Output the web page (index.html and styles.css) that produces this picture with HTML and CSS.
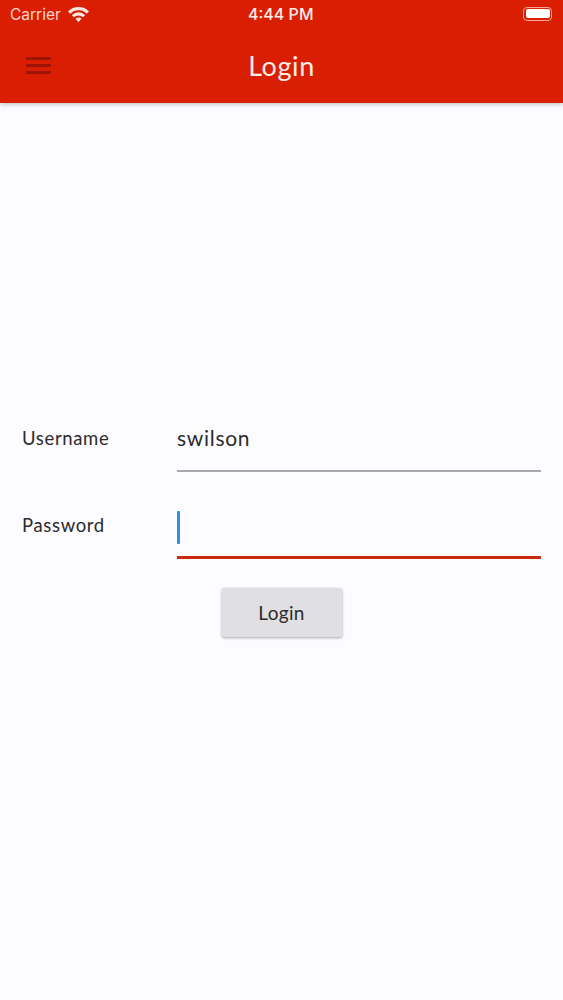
FILE: index.html
```html
<!DOCTYPE html>
<html lang="en">
<head>
    <meta charset="UTF-8">
    <title>Login</title>
    <link rel="stylesheet" href="styles.css">
</head>
<body>
    <header class="app-header">
        <div class="status-bar">
            <div class="status-left">
                <span class="carrier">Carrier</span>
                <svg class="wifi" viewBox="0 0 20 15" width="21" height="16">
                    <path d="M0 5 A14 14 0 0 1 20 5 L17.8 7.2 A11 11 0 0 0 2.2 7.2 Z" fill="#fde6e0"/>
                    <path d="M3.6 8.6 A9 9 0 0 1 16.4 8.6 L14.3 10.7 A6 6 0 0 0 5.7 10.7 Z" fill="#fde6e0"/>
                    <path d="M7.1 12.1 A4 4 0 0 1 12.9 12.1 L10 15 Z" fill="#fde6e0"/>
                </svg>
            </div>
            <span class="clock">4:44 PM</span>
            <div class="battery"><div class="battery-fill"></div></div>
        </div>
        <div class="toolbar">
            <div class="menu-icon"><span></span><span></span><span></span></div>
            <h1 class="title">Login</h1>
        </div>
    </header>

    <main class="login-form">
        <div class="form-row">
            <label class="field-label">Username</label>
            <div class="field"><span class="field-value">swilson</span></div>
        </div>
        <div class="form-row">
            <label class="field-label">Password</label>
            <div class="field field-focused"><span class="caret"></span></div>
        </div>
        <button class="login-btn" type="button">Login</button>
    </main>
</body>
</html>
```

FILE: styles.css
```css
html, body {
    margin: 0;
    padding: 0;
}
body {
    width: 563px;
    height: 1000px;
    overflow: hidden;
    background-color: #fcfbfd;
    color: #2c2b2d;
    font-family: "Lato", "Open Sans", sans-serif;
}

.app-header {
    height: 103px;
    background-color: #d91e01;
    box-shadow: 0 1px 5px rgba(0,0,0,.28);
    color: #fdeee9;
}
.status-bar {
    height: 30px;
    display: flex;
    align-items: center;
    justify-content: space-between;
    padding: 0 11px 1px 10px;
    position: relative;
    box-sizing: border-box;
}
.status-left {
    display: flex;
    align-items: center;
    gap: 7px;
}
.carrier {
    font-family: "Inter", "Liberation Sans", sans-serif;
    font-size: 15.5px;
    color: #fbd5cb;
}
.wifi {
    margin-top: -2px;
}
.clock {
    font-family: "Inter", "Liberation Sans", sans-serif;
    font-size: 16px;
    font-weight: 500;
    position: absolute;
    left: 248px;
    top: 4px;
}
.battery {
    width: 29px;
    height: 14px;
    border: 1px solid #f6a797;
    border-radius: 4px;
    padding: 1.5px;
    box-sizing: border-box;
    margin-top: -2px;
}
.battery-fill {
    height: 100%;
    background-color: #fff;
    border-radius: 2px;
}

.toolbar {
    height: 73px;
    display: flex;
    align-items: center;
    justify-content: center;
    position: relative;
}
.menu-icon {
    position: absolute;
    left: 26px;
    top: 27px;
    width: 25px;
    display: flex;
    flex-direction: column;
    gap: 4px;
}
.menu-icon span {
    height: 3px;
    background-color: #a01408;
}
.title {
    margin: -2px 0 0;
    font-size: 27px;
    font-weight: 400;
    letter-spacing: .6px;
}

.login-form {
    padding-top: 312px;
    display: flex;
    flex-direction: column;
    align-items: center;
}
.form-row {
    width: 100%;
    height: 87px;
    display: flex;
    padding: 0 22px;
    box-sizing: border-box;
}
.field-label {
    width: 155px;
    font-size: 18.5px;
    line-height: 23px;
    margin-top: 12px;
    letter-spacing: .65px;
}
.field {
    width: 364px;
    height: 57px;
    border-bottom: 2px solid #a9a8aa;
    box-sizing: border-box;
}
.field-value {
    display: block;
    font-size: 21px;
    line-height: 26px;
    margin-top: 10px;
    letter-spacing: .7px;
}
.field-focused {
    border-bottom: 3px solid #c92a10;
}
.caret {
    display: block;
    width: 3px;
    height: 33px;
    margin-top: 9px;
    background-color: #2b93d8;
    border-radius: 1px;
}
.login-btn {
    width: 120px;
    height: 49px;
    margin-top: -1px;
    border: 0;
    border-radius: 2px;
    background-color: #e0dfe1;
    box-shadow: 0 1px 3px rgba(0,0,0,.35);
    color: #2c2b2d;
    font-family: inherit;
    font-size: 19px;
    letter-spacing: .3px;
}
```
